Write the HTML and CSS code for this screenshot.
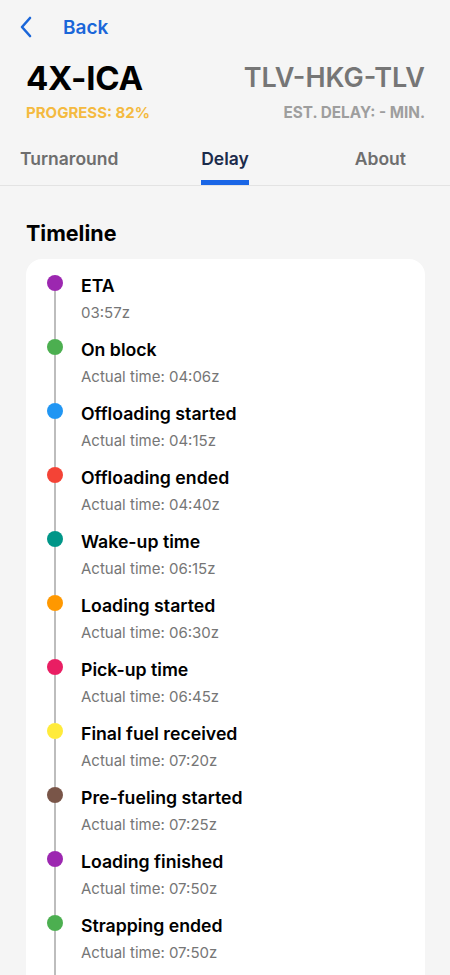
FILE: index.html
```html
<!DOCTYPE html>
<html>
<head>
<meta charset="utf-8">
<link rel="stylesheet" href="styles.css">
</head>
<body>
<div class="page">
  <div class="topbar">
    <svg class="chev" width="14" height="22" viewBox="0 0 14 22"><path d="M11 2 L3 11 L11 20" fill="none" stroke="#1a66d9" stroke-width="2.6" stroke-linecap="round" stroke-linejoin="round"/></svg>
    <span class="back">Back</span>
  </div>
  <div class="head">
    <div class="row">
      <div class="reg">4X-ICA</div>
      <div class="route">TLV-HKG-TLV</div>
    </div>
    <div class="row sub">
      <div class="progress">PROGRESS: 82%</div>
      <div class="delay">EST. DELAY: - MIN.</div>
    </div>
  </div>
  <div class="tabs">
    <div class="tab t-left">Turnaround</div>
    <div class="tab active">Delay</div>
    <div class="tab t-right">About</div>
  </div>
  <div class="content">
    <h2 class="title">Timeline</h2>
    <div class="card">
      <div class="item"><span class="dot c-purple"></span><div class="txt"><div class="name">ETA</div><div class="time">03:57z</div></div></div>
      <div class="item"><span class="dot c-green"></span><div class="txt"><div class="name">On block</div><div class="time">Actual time: 04:06z</div></div></div>
      <div class="item"><span class="dot c-blue"></span><div class="txt"><div class="name">Offloading started</div><div class="time">Actual time: 04:15z</div></div></div>
      <div class="item"><span class="dot c-red"></span><div class="txt"><div class="name">Offloading ended</div><div class="time">Actual time: 04:40z</div></div></div>
      <div class="item"><span class="dot c-teal"></span><div class="txt"><div class="name">Wake-up time</div><div class="time">Actual time: 06:15z</div></div></div>
      <div class="item"><span class="dot c-orange"></span><div class="txt"><div class="name">Loading started</div><div class="time">Actual time: 06:30z</div></div></div>
      <div class="item"><span class="dot c-pink"></span><div class="txt"><div class="name">Pick-up time</div><div class="time">Actual time: 06:45z</div></div></div>
      <div class="item"><span class="dot c-yellow"></span><div class="txt"><div class="name">Final fuel received</div><div class="time">Actual time: 07:20z</div></div></div>
      <div class="item"><span class="dot c-brown"></span><div class="txt"><div class="name">Pre-fueling started</div><div class="time">Actual time: 07:25z</div></div></div>
      <div class="item"><span class="dot c-purple"></span><div class="txt"><div class="name">Loading finished</div><div class="time">Actual time: 07:50z</div></div></div>
      <div class="item"><span class="dot c-green"></span><div class="txt"><div class="name">Strapping ended</div><div class="time">Actual time: 07:50z</div></div></div>
    </div>
  </div>
</div>
</body>
</html>
```

FILE: styles.css
```css
* { box-sizing: border-box; }
html, body { margin: 0; padding: 0; background: #f5f5f5; }
body { font-family: Inter, "Noto Sans", sans-serif; color: #000; }
.page { width: 450px; }

.topbar { display: flex; align-items: center; height: 56px; padding: 0 0 2px 19px; }
.chev { display: block; }
.back { margin-left: 30px; font-size: 19px; font-weight: 600; color: #1a66d9; }

.head { padding: 0 25px 0 26px; }
.row { display: flex; justify-content: space-between; align-items: center; }
.reg { font-size: 33px; font-weight: 700; line-height: 44px; letter-spacing: -0.2px; }
.route { font-size: 27px; font-weight: 600; color: #767676; line-height: 44px; }
.sub { margin-top: 3px; }
.progress { font-size: 15px; font-weight: 700; color: #f4ba40; line-height: 20px; }
.delay { font-size: 15.3px; font-weight: 700; color: #9e9e9e; line-height: 20px; }

.tabs { display: grid; grid-template-columns: 1fr auto 1fr; padding: 0 20px; margin-top: 25px; border-bottom: 1px solid #e3e3e3; }
.tab { font-size: 17.5px; font-weight: 600; color: #6e6e6e; line-height: 22px; padding-bottom: 15px; }
.t-left { justify-self: start; }
.t-right { justify-self: end; padding-right: 24px; }
.tab.active { color: #1b2b4b; padding-bottom: 10px; border-bottom: 5px solid #1a66e6; }

.content { padding: 0 25px 0 26px; }
.title { margin: 34px 0 0; font-size: 21.5px; font-weight: 700; line-height: 26px; }
.card { margin-top: 13px; background: #fff; border-radius: 16px; padding: 16px 21px 20px; }
.item { position: relative; display: flex; align-items: flex-start; gap: 18px; padding-bottom: 16px; }
.item::after { content: ""; position: absolute; left: 7px; top: 16px; width: 2px; bottom: 0; background: #bdbdbd; }
.dot { flex: none; width: 16px; height: 16px; border-radius: 50%; position: relative; z-index: 1; }
.name { font-size: 17.7px; font-weight: 600; line-height: 22px; }
.time { font-size: 15px; color: #767676; line-height: 20px; margin-top: 6px; }

.c-purple { background: #9c27b0; }
.c-green { background: #4caf50; }
.c-blue { background: #2196f3; }
.c-red { background: #f44336; }
.c-teal { background: #009688; }
.c-orange { background: #ff9800; }
.c-pink { background: #e91e63; }
.c-yellow { background: #ffeb3b; }
.c-brown { background: #795548; }
```
